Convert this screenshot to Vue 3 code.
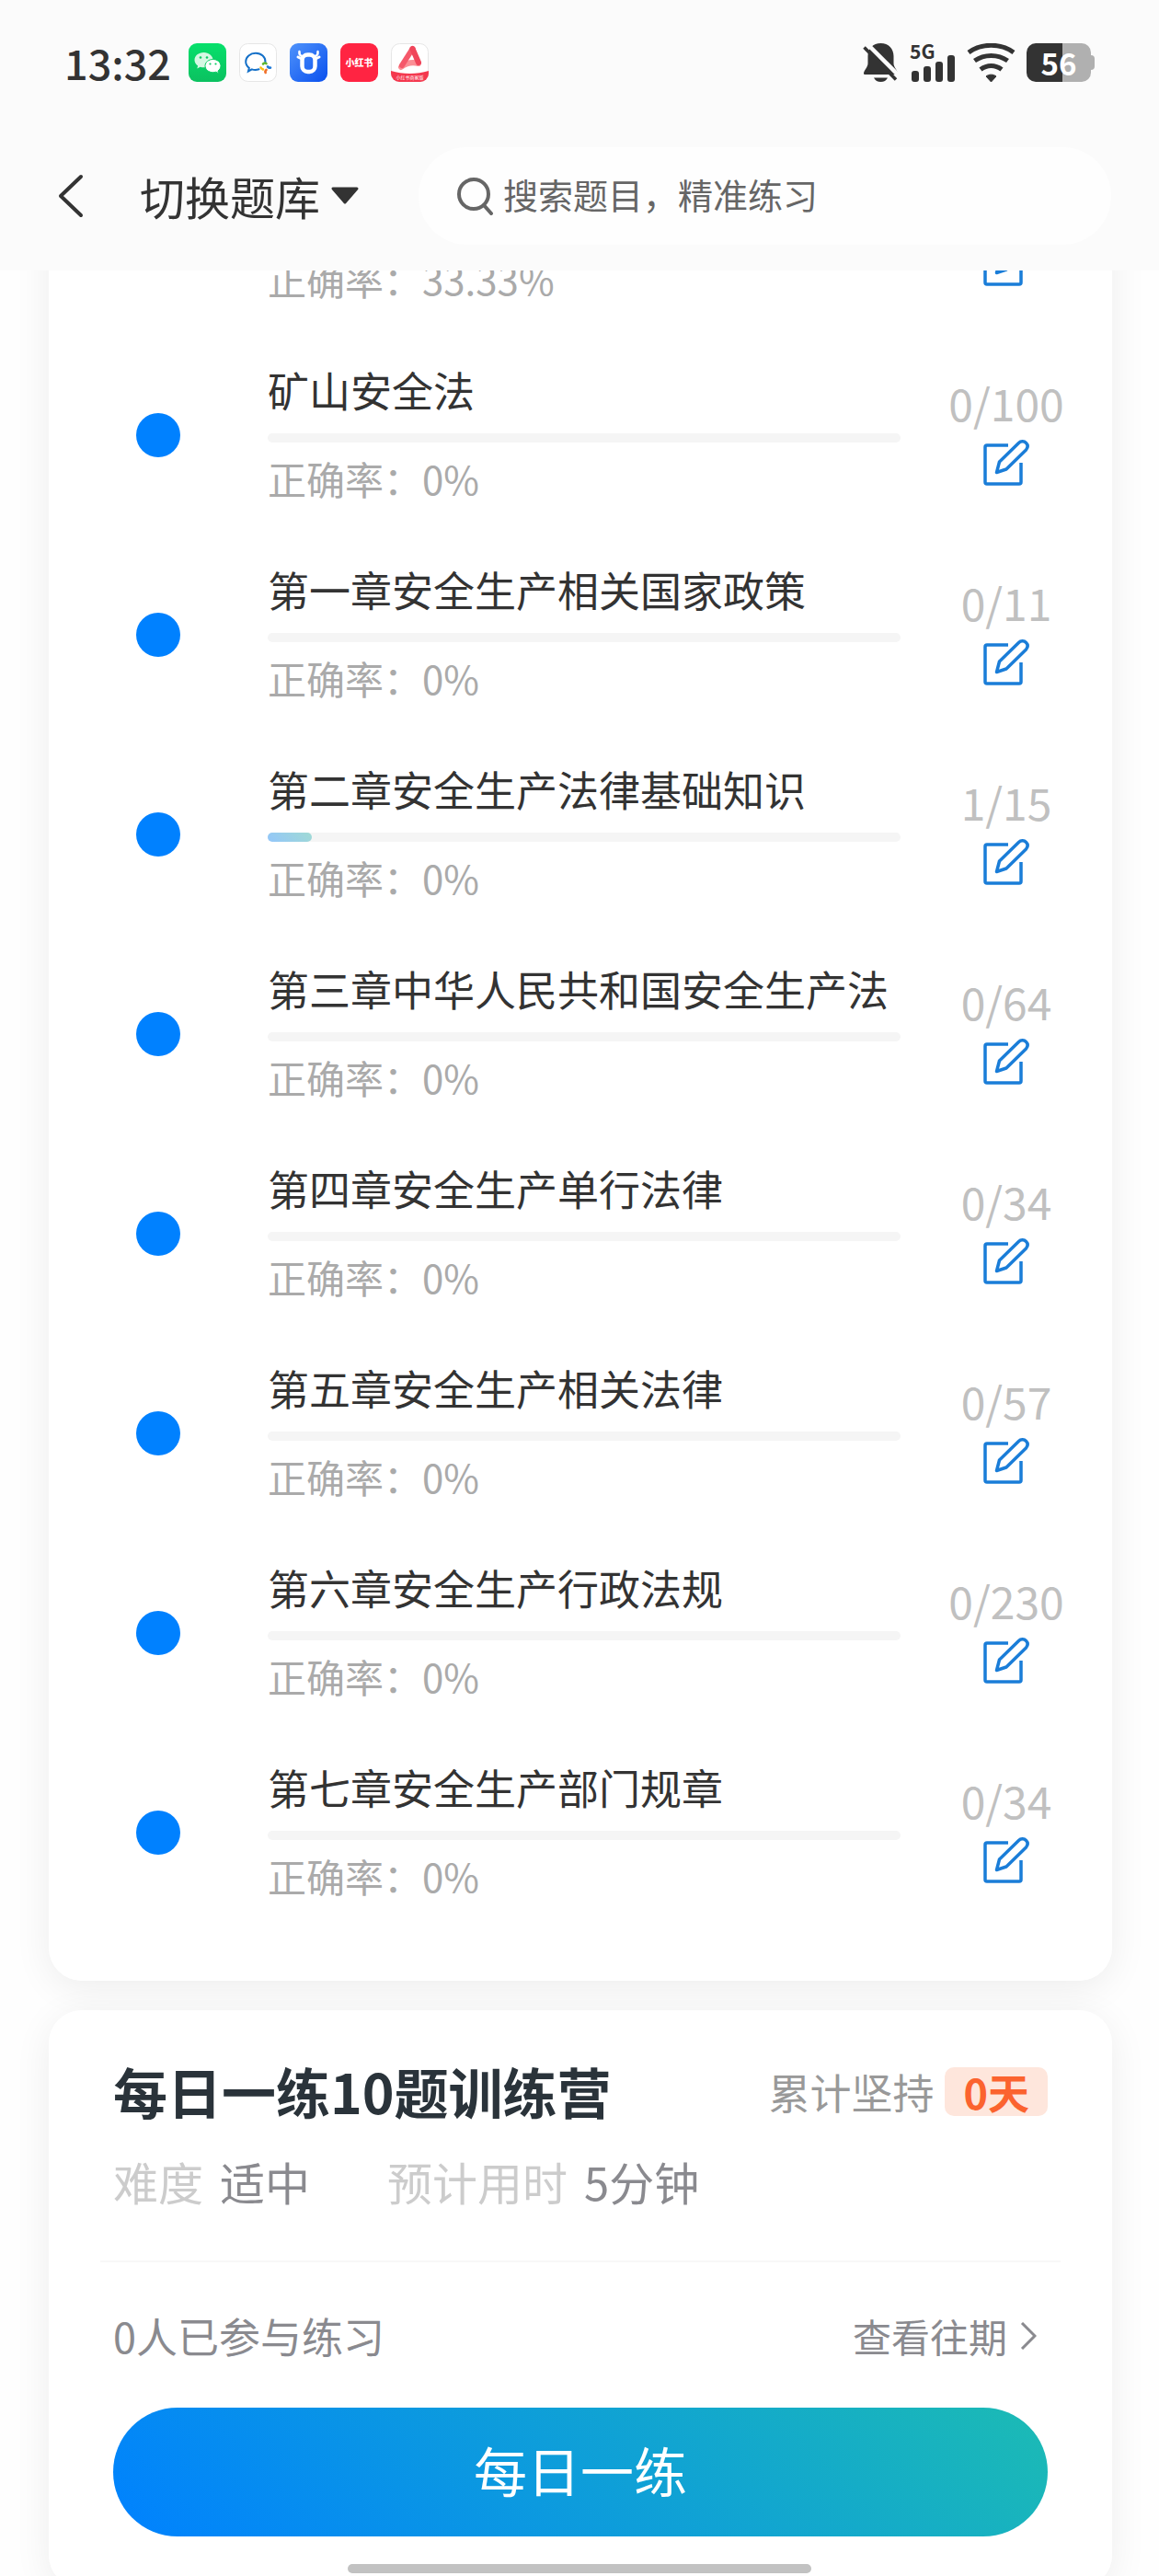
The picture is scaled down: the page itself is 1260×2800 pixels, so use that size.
<script setup>
const chapters = [
  { title: '', done: null, total: null, accuracy: '33.33%' },
  { title: '矿山安全法', done: 0, total: 100, accuracy: '0%' },
  { title: '第一章安全生产相关国家政策', done: 0, total: 11, accuracy: '0%' },
  { title: '第二章安全生产法律基础知识', done: 1, total: 15, accuracy: '0%' },
  { title: '第三章中华人民共和国安全生产法', done: 0, total: 64, accuracy: '0%' },
  { title: '第四章安全生产单行法律', done: 0, total: 34, accuracy: '0%' },
  { title: '第五章安全生产相关法律', done: 0, total: 57, accuracy: '0%' },
  { title: '第六章安全生产行政法规', done: 0, total: 230, accuracy: '0%' },
  { title: '第七章安全生产部门规章', done: 0, total: 34, accuracy: '0%' },
]

const percent = (c) => (c.total ? Math.round((c.done / c.total) * 100) : 0)
</script>

<template>
  <div class="page">
    <header class="header">
      <div class="status">
        <span class="time">13:32</span>
        <div class="apps">
          <svg class="app" viewBox="0 0 41 42" aria-hidden="true">
            <defs>
              <linearGradient id="wx" x1="0" y1="0" x2="0" y2="1">
                <stop offset="0" stop-color="#06e06b" />
                <stop offset="1" stop-color="#0bc160" />
              </linearGradient>
            </defs>
            <rect width="41" height="42" rx="9" fill="url(#wx)" />
            <path d="M16.500 10c-5.600 0-10 3.600-10 8.200 0 2.600 1.400 4.800 3.600 6.300l-.8 3 3.400-1.800c1.200.4 2.500.6 3.800.6 5.600 0 10-3.600 10-8.100S22.100 10 16.500 10z" fill="#d5f8e3" />
            <path d="M26.500 17.500c4.700 0 8.500 3.200 8.500 7.100 0 2.200-1.200 4.200-3 5.500l.6 2.600-2.900-1.500c-1 .3-2.100.5-3.200.5-4.700 0-8.500-3.200-8.500-7.100s3.800-7.100 8.500-7.100z" fill="#fff" stroke="#0acb63" stroke-width="1" />
            <g fill="#0acb63">
              <circle cx="13" cy="15.500" r="1.300" /><circle cx="20" cy="15.500" r="1.300" />
              <circle cx="23.500" cy="22.500" r="1.100" /><circle cx="29.500" cy="22.500" r="1.100" />
            </g>
          </svg>
          <svg class="app" viewBox="0 0 41 42" aria-hidden="true">
            <rect x=".5" y=".5" width="40" height="41" rx="9" fill="#fff" stroke="#e6e6e6" />
            <path d="M28.500 20.500c.3-5.700-4.500-9.800-10.500-9.800S7.200 14.800 7.200 20c0 2.800 1.400 5.200 3.600 6.900l-.9 3.600 4-2.100c2.500.8 5.200.7 7.600-.1" fill="none" stroke="#1470c8" stroke-width="2" stroke-linecap="round" />
            <g fill="none" stroke-width="2.600" stroke-linecap="round">
              <path d="M26 22.500c1-1.300 2.500-1.300 3.500-.3" stroke="#5db52f" />
              <path d="M31 25.500c1 1 2 1.500 3 1" stroke="#1c78d8" />
              <path d="M29.500 29c-1 1-1.500 2-.8 3" stroke="#f0702a" />
              <path d="M23.500 26.500c.5 1 1.500 1.500 2.500 2" stroke="#fbbc16" />
            </g>
          </svg>
          <svg class="app" viewBox="0 0 41 42" aria-hidden="true">
            <defs>
              <linearGradient id="ox" x1="0" y1="0" x2="1" y2="1">
                <stop offset="0" stop-color="#4f93fb" />
                <stop offset="1" stop-color="#0a50ee" />
              </linearGradient>
            </defs>
            <rect width="41" height="42" rx="9" fill="url(#ox)" />
            <path d="M10.500 9c-.5 3 .2 4 2.500 5M30.500 9c.5 3-.2 4-2.500 5" fill="none" stroke="#fff" stroke-width="2.500" stroke-linecap="round" />
            <path d="M9 15l4 2M32 15l-4 2" stroke="#fff" stroke-width="3" stroke-linecap="round" />
            <rect x="13.500" y="12.500" width="14" height="18.500" rx="6" fill="none" stroke="#fff" stroke-width="4.500" />
          </svg>
          <svg class="app" viewBox="0 0 41 42" aria-hidden="true">
            <rect width="41" height="42" rx="9" fill="#ff2442" />
            <text x="20.500" y="25" text-anchor="middle" font-size="10" font-weight="900" fill="#fff">小红书</text>
          </svg>
          <svg class="app" viewBox="0 0 41 42" aria-hidden="true">
            <defs>
              <clipPath id="tile"><rect width="41" height="42" rx="9" /></clipPath>
            </defs>
            <rect x=".5" y=".5" width="40" height="41" rx="9" fill="#fff" stroke="#e6e6e6" />
            <path d="M0 30c13 4 28 4 41 0v12H0z" fill="#f4384e" clip-path="url(#tile)" />
            <path d="M11 26c5-4 12-6 19-4" fill="none" stroke="#fb8f95" stroke-width="6" stroke-linecap="round" />
            <path d="M12 24L23.500 6" stroke="#f5586a" stroke-width="6" stroke-linecap="round" />
            <path d="M23.500 6l6.500 15" stroke="#f0455a" stroke-width="6" stroke-linecap="round" />
            <text x="20.500" y="39" text-anchor="middle" font-size="5" fill="#fff">小红书商家版</text>
          </svg>
        </div>
        <div class="signals">
          <svg class="bell" viewBox="0 0 39 42" aria-label="静音">
            <path d="M19.500 0C11 0 5.500 6 5.500 14v8c0 4-4 7-4.500 10.500 0 1 .5 1.500 1.500 1.500h34c1 0 1.500-.5 1.500-1.500-.5-3.500-4.500-6.500-4.500-10.500v-8C33.500 6 28 0 19.500 0z" fill="#333" />
            <path d="M12 37.500h15c-1.500 3-4 4.500-7.500 4.500s-6-1.500-7.500-4.500z" fill="#333" />
            <path d="M4 0L41 37" stroke="#fbfbfb" stroke-width="4.500" />
            <path d="M1.500 4.500L36 39.500" stroke="#333" stroke-width="3.500" />
          </svg>
          <svg class="cell" viewBox="0 0 50 42" aria-label="5G">
            <text x="0" y="17" font-size="21" font-weight="700" fill="#333">5G</text>
            <g fill="#333">
              <rect x="2" y="30" width="8" height="12" rx="3" />
              <rect x="15" y="25" width="8" height="17" rx="3" />
              <rect x="28" y="20" width="8" height="22" rx="3" />
              <rect x="41" y="13" width="8" height="29" rx="3" />
            </g>
          </svg>
          <svg class="wifi" viewBox="0 0 53 42" aria-label="Wi-Fi">
            <g fill="none" stroke="#333" stroke-width="5">
              <path d="M2 10C16-.3 37-.3 51 10" />
              <path d="M8.500 19C19 11.500 34 11.500 44.500 19" />
              <path d="M15 28.500c7-5.500 16-5.500 23 0" />
            </g>
            <path d="M21 36c3-2.500 8-2.500 11 0l-5.500 6z" fill="#333" stroke="#333" />
          </svg>
          <span class="battery">56</span>
        </div>
      </div>
      <div class="nav">
        <button class="back" type="button" aria-label="返回">
          <svg viewBox="0 0 28 48"><path d="M25 3L3 24l22 21" fill="none" stroke="#333" stroke-width="4" stroke-linecap="round" stroke-linejoin="round" /></svg>
        </button>
        <button class="switch" type="button">
          切换题库
          <svg viewBox="0 0 32 20" aria-hidden="true"><path d="M3 2h26L16 17z" fill="#333" stroke="#333" stroke-width="3" stroke-linejoin="round" /></svg>
        </button>
        <label class="search">
          <svg viewBox="0 0 40 42" aria-hidden="true"><g fill="none" stroke="#666" stroke-width="4" stroke-linecap="round"><circle cx="18" cy="19" r="16" /><path d="M29 31l8 9" /></g></svg>
          <input type="text" placeholder="搜索题目，精准练习" aria-label="搜索题目" />
        </label>
      </div>
    </header>

    <main class="content">
      <section class="card chapters">
        <div v-for="(c, i) in chapters" :key="i" class="row">
          <div class="mark"><i v-if="c.title" class="dot"></i></div>
          <div class="info">
            <div class="title">{{ c.title }}</div>
            <div class="bar" role="progressbar" :aria-valuenow="percent(c)" aria-valuemin="0" aria-valuemax="100">
              <div class="fill" :style="{ width: percent(c) + '%' }"></div>
            </div>
            <div class="accuracy">正确率：{{ c.accuracy }}</div>
          </div>
          <div class="action">
            <span class="count"><template v-if="c.total">{{ c.done }}/{{ c.total }}</template></span>
            <button class="edit" type="button" aria-label="开始练习">
              <svg viewBox="0 0 50 50">
                <g fill="none" stroke="#1a7dd8" stroke-width="3.500" stroke-linejoin="round">
                  <path d="M27 6H4a2 2 0 0 0-2 2v38a2 2 0 0 0 2 2h35a2 2 0 0 0 2-2V25" />
                  <path d="M38.500 3.500c2.500-2.500 6-2 8 0s2 5 0 7.500L25 32l-10.500 3.500L17.500 24z" />
                </g>
              </svg>
            </button>
          </div>
        </div>
      </section>

      <section class="card daily">
        <div class="daily-head">
          <h2>每日一练10题训练营</h2>
          <div class="streak">累计坚持<b>0天</b></div>
        </div>
        <dl class="facts">
          <div><dt>难度</dt><dd>适中</dd></div>
          <div><dt>预计用时</dt><dd>5分钟</dd></div>
        </dl>
        <div class="daily-foot">
          <span>0人已参与练习</span>
          <a href="#">查看往期
            <svg viewBox="0 0 18 30" aria-hidden="true"><path d="M2 1l14 14L2 29" fill="none" stroke="#8a8a8f" stroke-width="3" /></svg>
          </a>
        </div>
        <button class="start" type="button">每日一练</button>
      </section>
    </main>
    <div class="home-bar"></div>
  </div>
</template>

<style>
body {
  background: #fefefe;
}
</style>

<style scoped>
.page {
  height: 100vh;
  overflow: hidden;
  position: relative;
  background: #fefefe;
  color: #333;
  font-family: "Noto Sans CJK SC", "Noto Sans", sans-serif;
}
.page *,
.page *::before {
  box-sizing: border-box;
}
svg {
  display: block;
  flex: none;
}
button {
  padding: 0;
  border: 0;
  background: none;
  color: inherit;
  font-family: inherit;
}
.header {
  position: fixed;
  inset: 0 0 auto 0;
  z-index: 2;
  height: 294px;
  background: #fbfbfb;
}
.status {
  display: flex;
  align-items: center;
  height: 136px;
  padding: 0 70px;
}
.time {
  font-size: 45px;
  font-weight: 500;
  line-height: 60px;
}
.apps {
  display: flex;
  gap: 14px;
  margin-left: 19px;
}
.app {
  width: 41px;
  height: 42px;
}
.signals {
  display: flex;
  align-items: center;
  gap: 12px;
  margin-left: auto;
}
.bell {
  width: 39px;
  height: 42px;
}
.cell {
  width: 50px;
  height: 42px;
  overflow: visible;
}
.wifi {
  width: 53px;
  height: 42px;
}
.battery {
  position: relative;
  width: 70px;
  margin-right: 4px;
  border-radius: 10px;
  background: linear-gradient(90deg, #333 55%, #b0b0b0 55%);
  color: #fff;
  font-size: 33px;
  font-weight: 700;
  line-height: 42px;
  text-align: center;
}
.battery::after {
  content: "";
  position: absolute;
  top: 13px;
  right: -4px;
  width: 4px;
  height: 16px;
  border-radius: 0 4px 4px 0;
  background: #b0b0b0;
}
.nav {
  display: flex;
  align-items: center;
  height: 154px;
  padding: 0 52px 0 63px;
}
.back svg {
  width: 28px;
  height: 48px;
}
.switch {
  display: flex;
  align-items: center;
  gap: 11px;
  margin-left: 61px;
  font-size: 49px;
  line-height: 60px;
}
.switch svg {
  width: 32px;
  height: 20px;
}
.search {
  display: flex;
  flex: 1;
  align-items: center;
  gap: 10px;
  height: 106px;
  margin-left: 64px;
  padding: 0 42px;
  border-radius: 53px;
  background: #fefefe;
}
.search svg {
  width: 40px;
  height: 42px;
}
.search input {
  flex: 1;
  min-width: 0;
  padding: 0 0 4px;
  border: 0;
  outline: 0;
  background: none;
  font-family: inherit;
  font-size: 38px;
  line-height: 60px;
}
.search input::placeholder {
  color: #666;
  opacity: 1;
}
.content {
  position: relative;
  z-index: 0;
  display: flex;
  flex-direction: column;
  gap: 32px;
  padding: 0 51px 0 53px;
}
.card {
  position: relative;
  border-radius: 36px;
  background: #fff;
}
.card::before {
  content: "";
  position: absolute;
  inset: 0;
  z-index: -1;
  border-radius: 36px;
  box-shadow: 0 8px 40px rgba(0, 0, 0, 0.07);
}
.chapters {
  padding: 149px 0 51px;
}
.row {
  display: grid;
  grid-template-columns: 238px 1fr 230px;
  height: 217px;
}
.mark {
  display: flex;
  justify-content: center;
  padding-top: 83px;
}
.dot {
  width: 48px;
  height: 48px;
  border-radius: 50%;
  background: #0081ff;
}
.info {
  padding-top: 28px;
}
.title {
  height: 60px;
  font-size: 45px;
  line-height: 60px;
  white-space: nowrap;
}
.bar {
  height: 10px;
  margin: 17px 0 9px;
  border-radius: 5px;
  background: #f5f5f5;
}
.fill {
  height: 10px;
  border-radius: 5px;
  background: linear-gradient(45deg, #93c6fa, #a0dad4);
}
.accuracy {
  color: #aaa;
  font-size: 42px;
  line-height: 60px;
}
.action {
  display: flex;
  flex-direction: column;
  align-items: center;
  gap: 11px;
  padding-top: 41px;
}
.count {
  height: 60px;
  color: #c0c0c0;
  font-size: 48px;
  line-height: 60px;
}
.edit svg {
  width: 50px;
  height: 50px;
}
.daily {
  padding: 52px 70px 56px;
}
.daily-head,
.daily-foot {
  display: flex;
  align-items: center;
  justify-content: space-between;
}
h2 {
  margin: 0;
  color: #2a333a;
  font-size: 59px;
  font-weight: 700;
  line-height: 72px;
}
.streak {
  display: flex;
  align-items: center;
  gap: 12px;
  color: #999;
  font-size: 45px;
  line-height: 53px;
}
.streak b {
  padding: 0 20px;
  border-radius: 10px;
  background: #fee6dc;
  color: #fb632f;
}
.facts {
  display: flex;
  gap: 84px;
  margin: 32px 0 56px;
  font-size: 49px;
  line-height: 60px;
}
.facts div {
  display: flex;
  gap: 18px;
}
.facts dt {
  color: #ccc;
}
.facts dd {
  margin: 0;
  color: #8a8a8f;
}
.daily-foot {
  margin: 0 -14px;
  padding: 50px 26px 48px 14px;
  border-top: 2px solid #f8f8f8;
  color: #8a8a8f;
  font-size: 45px;
  line-height: 60px;
}
.daily-foot a {
  display: flex;
  align-items: center;
  gap: 14px;
  color: inherit;
  font-size: 42px;
  text-decoration: none;
}
.daily-foot svg {
  width: 18px;
  height: 30px;
}
.start {
  display: block;
  width: 100%;
  height: 140px;
  padding-bottom: 6px;
  border-radius: 70px;
  background: linear-gradient(45deg, #0081ff, #1cbbb4);
  color: #fff;
  font-size: 58px;
}
.home-bar {
  position: fixed;
  bottom: 3px;
  left: 30%;
  z-index: 3;
  width: 40%;
  height: 10px;
  border-radius: 5px;
  background: #c2c2c2;
}
</style>
